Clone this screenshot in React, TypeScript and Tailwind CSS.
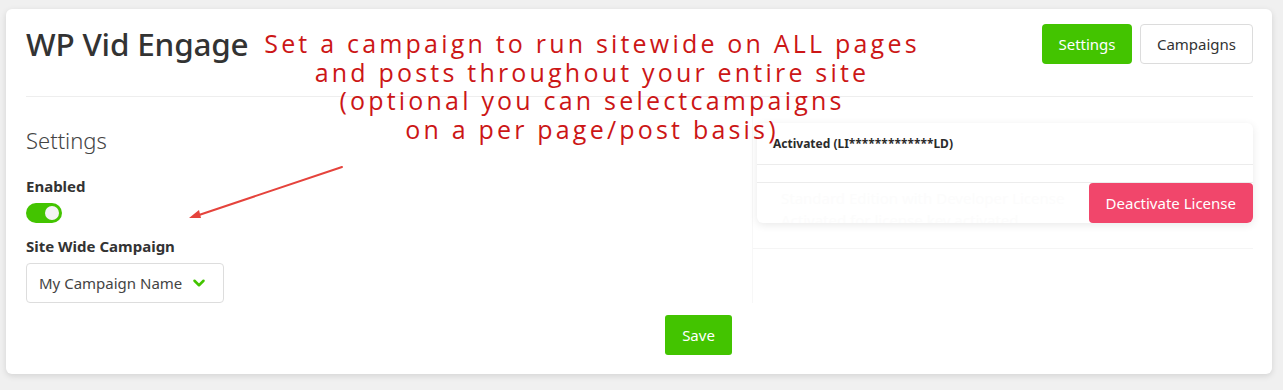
import { ChevronDown } from "lucide-react";

// WP Vid Engage – settings screen with red annotation overlay

const font = "font-['Noto_Sans',_'Open_Sans',_sans-serif]";

function Toggle() {
  return (
    <div className="mt-[7px] w-[36px] h-[20px] rounded-full bg-[#43c400] relative">
      <span className="absolute right-[3px] top-[3px] w-[14px] h-[14px] rounded-full bg-[#f4f4f4]" />
    </div>
  );
}

function LicenseCard() {
  return (
    <div className="mt-[12px] ml-[4px] bg-white rounded-md shadow-[0_2px_8px_rgba(0,0,0,0.09)] overflow-hidden">
      <div className="h-[42px] px-4 flex items-center border-b border-[#ececec] text-[12px] font-bold text-[#2b2b2b]">
        Activated (LI*************LD)
      </div>
      <div className="h-[18px] border-b border-[#ececec]" />
      <div className="h-[40px] flex justify-between overflow-hidden">
        <div className="pl-6 pt-[4px] text-[15px] leading-[22px] text-[#fcfcfc] whitespace-nowrap">
          <div>Standard Edition with Developer License</div>
          <div>Activated for license key activated</div>
        </div>
        <button className="h-[40px] px-[17px] bg-[#f1466b] text-white text-[15px] rounded-[4px] shrink-0">
          Deactivate License
        </button>
      </div>
    </div>
  );
}

export default function App() {
  return (
    <div className={`min-h-[390px] bg-[#f0f0f0] pt-[9px] pl-[6px] pr-[11px] relative ${font}`}>
      <div className="h-[365px] bg-white rounded-md shadow-[0_2px_6px_rgba(0,0,0,0.12)] pl-5 pr-[19px] pt-[15px]">
        {/* Header */}
        <div className="flex items-center justify-between h-[40px]">
          <h1 className="text-[31.5px] leading-[40px] font-medium text-[#333] tracking-[-0.2px]">WP Vid Engage</h1>
          <div className="flex gap-2">
            <button className="h-[40px] w-[90px] bg-[#43c400] text-white text-[15px] rounded-[4px]">Settings</button>
            <button className="h-[40px] w-[113px] bg-white border border-[#dcdcdc] text-[#333] text-[15px] rounded-[4px]">
              Campaigns
            </button>
          </div>
        </div>
        <div className="mt-[32px] border-t border-[#eeeeee]" />

        {/* Columns */}
        <div className="mt-[14px] grid grid-cols-[726px_1fr]">
          <div className="pt-[14px]">
            <h2 className="text-[22px] leading-[30px] font-light text-[#444]">Settings</h2>
            <div className="mt-[21px] text-[15px] leading-[20px] font-bold text-[#333]">Enabled</div>
            <Toggle />
            <div className="mt-[13px] text-[15px] leading-[20px] font-bold text-[#333]">Site Wide Campaign</div>
            <div className="mt-[7px] w-[198px] h-[40px] border border-[#dddddd] rounded-[4px] flex items-center justify-between pl-3 pr-[15px] text-[15px] text-[#444]">
              <span>My Campaign Name</span>
              <ChevronDown size={18} strokeWidth={3.4} className="text-[#43c400]" />
            </div>
          </div>
          <div className="border-l border-[#f7f7f7]">
            <LicenseCard />
            <div className="mt-[25px] border-t border-[#f5f5f5]" />
          </div>
        </div>

        {/* Save */}
        <div className="mt-[12px] pl-[639px]">
          <button className="h-[40px] w-[67px] bg-[#43c400] text-white text-[15px] rounded-[3px]">Save</button>
        </div>
      </div>

      {/* Annotation text */}
      <div className="absolute left-[142px] top-[29px] w-[900px] text-center text-[25px] leading-[28.5px] tracking-[3.2px] text-[#cc1616] font-['Open_Sans',_sans-serif]">
        <div>Set a campaign to run sitewide on ALL pages</div>
        <div>and posts throughout your entire site</div>
        <div>(optional you can selectcampaigns</div>
        <div>on a per page/post basis)</div>
      </div>

      {/* Annotation arrow */}
      <svg className="absolute left-0 top-0 pointer-events-none" width="400" height="240">
        <line x1="342" y1="167" x2="196" y2="216" stroke="#e5433c" strokeWidth="2" strokeLinecap="round" />
        <polygon points="189,218 199,210 201,218" fill="#e5433c" />
      </svg>
    </div>
  );
}
